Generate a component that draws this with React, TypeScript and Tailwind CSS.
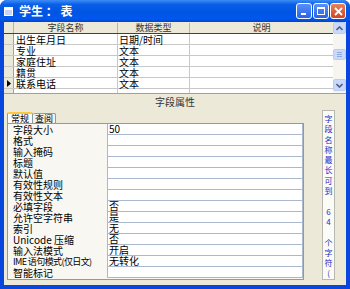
const fields = [
  ['出生年月日', '日期/时间'],
  ['专业', '文本'],
  ['家庭住址', '文本'],
  ['籍贯', '文本'],
  ['联系电话', '文本'],
  ['', ''],
]

const props = [
  ['字段大小', '50'],
  ['格式', ''],
  ['输入掩码', ''],
  ['标题', ''],
  ['默认值', ''],
  ['有效性规则', ''],
  ['有效性文本', ''],
  ['必填字段', '否'],
  ['允许空字符串', '是'],
  ['索引', '无'],
  ['Unicode 压缩', '否'],
  ['输入法模式', '开启'],
  ['IME 语句模式(仅日文)', '无转化'],
  ['智能标记', ''],
]

const helpChars = ['字', '段', '名', '称', '最', '长', '可', '到', '', '6', '4', '', '个', '字', '符', '(']

const font = { fontFamily: '"Noto Sans CJK SC", "Liberation Sans", sans-serif' }

function Chevron({ up }: { up?: boolean }) {
  return (
    <svg width="7" height="5" viewBox="0 0 7 5">
      <path d={up ? 'M0.5 4L3.5 1L6.5 4' : 'M0.5 1L3.5 4L6.5 1'} fill="none" stroke="#4D6185" strokeWidth="1.6" />
    </svg>
  )
}

export default function App() {
  return (
    <div
      className="flex h-[289px] w-[350px] flex-col overflow-hidden rounded-t-[7px] bg-[#0747DD] text-[10px] leading-[11px] text-black"
      style={font}
    >
      {/* title bar */}
      <div className="flex h-[22px] items-center bg-[linear-gradient(to_bottom,#3D8DF5_0%,#0A5FE8_20%,#0054E3_55%,#0058EE_85%,#0043D0_100%)] pl-[4px] pr-[4px]">
        <div className="flex h-[9px] w-[9px] flex-col border border-white bg-[#C6D3F7]">
          <div className="h-[2px] bg-white" />
        </div>
        <span className="ml-[6px] text-[12px] font-bold leading-[14px] text-white">学生 ： 表</span>
        <div className="ml-auto flex gap-[1px]">
          <div className="flex h-[16px] w-[16px] items-end justify-start rounded-[3px] border border-white bg-[linear-gradient(to_bottom,#5B8FF9,#2663E8)] pb-[3px] pl-[4px]">
            <div className="h-[2px] w-[5px] bg-white" />
          </div>
          <div className="flex h-[16px] w-[16px] items-center justify-center rounded-[3px] border border-white bg-[linear-gradient(to_bottom,#5B8FF9,#2663E8)]">
            <div className="h-[8px] w-[8px] border border-t-2 border-white" />
          </div>
          <div className="flex h-[16px] w-[16px] items-center justify-center rounded-[3px] border border-white bg-[linear-gradient(to_bottom,#E8825E,#D3431E)]">
            <svg width="9" height="9" viewBox="0 0 9 9">
              <path d="M1 1L8 8M8 1L1 8" stroke="white" strokeWidth="1.8" />
            </svg>
          </div>
        </div>
      </div>

      {/* body */}
      <div className="mx-[4px] mb-[4px] flex flex-1 flex-col bg-[#ECE9D8]">
        {/* field grid */}
        <div className="flex h-[71px] overflow-hidden bg-white">
          <div className="flex flex-1 flex-col">
            <div className="flex h-[12px] shrink-0 items-center border-b border-[#404040] bg-[#ECE9D8] text-[9px] leading-[10px] text-[#333]">
              <div className="h-full w-[10px] border-r border-[#B8B4A0]" />
              <div className="w-[104px] border-r border-[#B8B4A0] text-center">字段名称</div>
              <div className="w-[72px] border-r border-[#B8B4A0] text-center">数据类型</div>
              <div className="flex-1 text-center">说明</div>
            </div>
            {fields.map(([name, type], i) => (
              <div key={i} className="flex h-[11px] shrink-0 border-b border-[#C8C8C8] leading-[11px]">
                <div className="flex w-[10px] items-center justify-center border-r border-[#A0A0A0] bg-[#ECE9D8]">
                  {i === 4 && (
                    <svg width="4" height="7" viewBox="0 0 4 7">
                      <path d="M0 0L4 3.5L0 7Z" fill="black" />
                    </svg>
                  )}
                </div>
                <div className="w-[104px] border-r border-[#C8C8C8] pl-[2px]">{name}</div>
                <div className="w-[72px] border-r border-[#C8C8C8] pl-[1px]">{type}</div>
                <div className="flex-1" />
              </div>
            ))}
          </div>
          <div className="flex w-[13px] flex-col bg-[#F6F5EF]">
            <div className="flex h-[12px] items-center justify-center rounded-[2px] border border-[#B9CCF5] bg-[#C9D8FB]">
              <Chevron up />
            </div>
            <div className="mt-[15px] flex h-[11px] flex-col items-center justify-center gap-[1px] rounded-[2px] border border-[#B9CCF5] bg-[#C9D8FB]">
              <div className="h-[1px] w-[5px] bg-[#8EA8E8]" />
              <div className="h-[1px] w-[5px] bg-[#8EA8E8]" />
              <div className="h-[1px] w-[5px] bg-[#8EA8E8]" />
            </div>
            <div className="mt-[19px] flex h-[12px] items-center justify-center rounded-[2px] border border-[#B9CCF5] bg-[#C9D8FB]">
              <Chevron />
            </div>
          </div>
        </div>

        {/* section label */}
        <div className="flex h-[15px] items-center justify-center border-t border-[#A0A0A0] text-[#333]">字段属性</div>

        {/* properties */}
        <div className="flex flex-1">
          <div className="ml-[3px] flex w-[297px] flex-col">
            <div className="flex h-[15px] items-end pt-[4px] text-[9px] leading-[9px]">
              <div className="h-[11px] w-[26px] rounded-t-[2px] border border-b-0 border-t-2 border-[#919B9C] border-t-[#FFC83C] bg-[#FCFCFE] text-center">
                常规
              </div>
              <div className="h-[10px] w-[23px] rounded-t-[2px] border border-b-0 border-l-0 border-[#919B9C] bg-[#F3F3EE] text-center">
                查阅
              </div>
            </div>
            <div className="flex flex-col border border-[#919B9C] bg-[#F8F7F2] pb-[1px] pl-[5px] leading-[11px]">
              {props.map(([label, value], i) => (
                <div key={i} className="flex h-[11px]">
                  <div
                    className={`w-[94px] whitespace-nowrap ${i === 12 ? 'text-[9px] tracking-[-0.6px]' : ''}`}
                  >
                    {label}
                  </div>
                  <div className="flex-1 border-b border-l border-r border-[#A9B8CC] bg-white pl-[1px] leading-[10px]">
                    {value}
                  </div>
                </div>
              ))}
            </div>
          </div>
          <div className="ml-auto mr-[11px] mt-[2px] mb-[5px] flex w-[13px] flex-col items-center border border-[#B8B8B0] bg-[#FBFBF7] pt-[3px] text-[8px] leading-[10.3px] text-[#2828C4]">
            {helpChars.map((c, i) => (
              <div key={i} className="h-[10.3px]">
                {c}
              </div>
            ))}
          </div>
        </div>
      </div>
    </div>
  )
}
